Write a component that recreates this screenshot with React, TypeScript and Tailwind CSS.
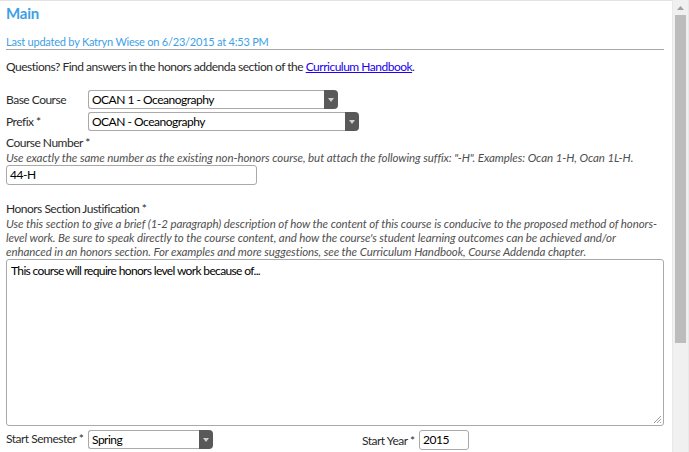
import React from "react";

const FONT = { fontFamily: '"Lato", "Open Sans", sans-serif' };

function Select({ value, width }: { value: string; width: string }) {
  return (
    <div className={`flex h-[19px] ${width}`}>
      <div className="flex flex-1 items-center whitespace-nowrap rounded-l-[3px] border border-r-0 border-[#a9a9a9] bg-white pl-[3px] text-[12px] leading-[17px] text-black">
        {value}
      </div>
      <div className="flex w-[14px] items-center justify-center rounded-r-[4px] bg-[#595959]">
        <svg width="6" height="4" viewBox="0 0 6 4">
          <path d="M0 0 L6 0 L3 4 Z" fill="#d0d0d0" />
        </svg>
      </div>
    </div>
  );
}

export default function App() {
  return (
    <div
      className="flex h-[452px] w-[689px] overflow-hidden bg-white tracking-[-0.5px] text-[#2b2b2b]"
      style={FONT}
    >
      <div className="flex-1 border-t border-[#e3e3e3] pl-[6px]">
        <div className="mt-[2px] h-[20px] text-[15px] font-bold leading-[20px] tracking-[-0.2px] text-[#3d9fe6]">
          Main
        </div>
        <div className="mt-[12px] h-[15px] w-[658px] border-b border-[#a8a8a8] text-[11px] leading-[14px] tracking-[-0.22px] text-[#3d9fe6]">
          Last updated by Katryn Wiese on 6/23/2015 at 4:53 PM
        </div>
        <div className="mt-[9px] text-[12px] leading-[16px]">
          Questions? Find answers in the honors addenda section of the{" "}
          <span className="text-[#2200ee] underline">Curriculum Handbook</span>.
        </div>
        <div className="mt-[15px] flex items-center">
          <div className="w-[82px] whitespace-nowrap text-[12px]">Base Course</div>
          <Select value="OCAN 1 - Oceanography" width="w-[250px]" />
        </div>
        <div className="mt-[3px] flex items-center">
          <div className="w-[82px] whitespace-nowrap text-[12px]">Prefix *</div>
          <Select value="OCAN - Oceanography" width="w-[271px]" />
        </div>
        <div className="mt-[4px] text-[12px] leading-[16px]">Course Number *</div>
        <div className="whitespace-nowrap text-[11.5px] italic leading-[14px] tracking-[-0.07px] text-[#505050]">
          Use exactly the same number as the existing non-honors course, but attach the following suffix: "-H". Examples: Ocan 1-H, Ocan 1L-H.
        </div>
        <div className="flex h-[20px] w-[251px] items-center rounded-[3px] border border-[#a9a9a9] pl-[3px] text-[12px] text-black">
          44-H
        </div>
        <div className="mt-[16px] text-[12px] leading-[16px]">Honors Section Justification *</div>
        <div className="whitespace-nowrap text-[11.5px] italic leading-[14px] tracking-[-0.08px] text-[#505050]">
          <div>Use this section to give a brief (1-2 paragraph) description of how the content of this course is conducive to the proposed method of honors-</div>
          <div>level work. Be sure to speak directly to the course content, and how the course's student learning outcomes can be achieved and/or</div>
          <div>enhanced in an honors section. For examples and more suggestions, see the Curriculum Handbook, Course Addenda chapter.</div>
        </div>
        <div className="relative h-[167px] w-[658px] rounded-[3px] border border-[#a9a9a9] px-[4px] pt-[2px] text-[12px] tracking-[-0.65px] text-black">
          This course will require honors level work because of...
          <svg className="absolute bottom-[1px] right-[1px]" width="9" height="9" viewBox="0 0 9 9">
            <path d="M8 1 L1 8 M8 4 L4 8 M8 7 L7 8" stroke="#9a9a9a" strokeWidth="1" />
          </svg>
        </div>
        <div className="mt-[4px] flex items-start">
          <div className="mt-[1px] w-[82px] whitespace-nowrap text-[12px] leading-[16px]">Start Semester *</div>
          <Select value="Spring" width="w-[125px]" />
          <div className="ml-[149px] mt-[3px] w-[57px] whitespace-nowrap text-[12px] leading-[16px]">Start Year *</div>
          <div className="flex h-[20px] w-[50px] items-center rounded-[3px] border border-[#a9a9a9] pl-[3px] text-[12px] text-black">
            2015
          </div>
        </div>
      </div>
      <div className="flex w-[17px] flex-col border-l border-r border-[#e8e8e8] bg-[#f0f0f0]">
        <div className="flex h-[15px] items-center justify-center">
          <svg width="7" height="4" viewBox="0 0 7 4">
            <path d="M0 4 L7 4 L3.5 0 Z" fill="#a0a0a0" />
          </svg>
        </div>
        <div className="mx-auto h-[328px] w-[11px] bg-[#bcbcbc]" />
      </div>
    </div>
  );
}
